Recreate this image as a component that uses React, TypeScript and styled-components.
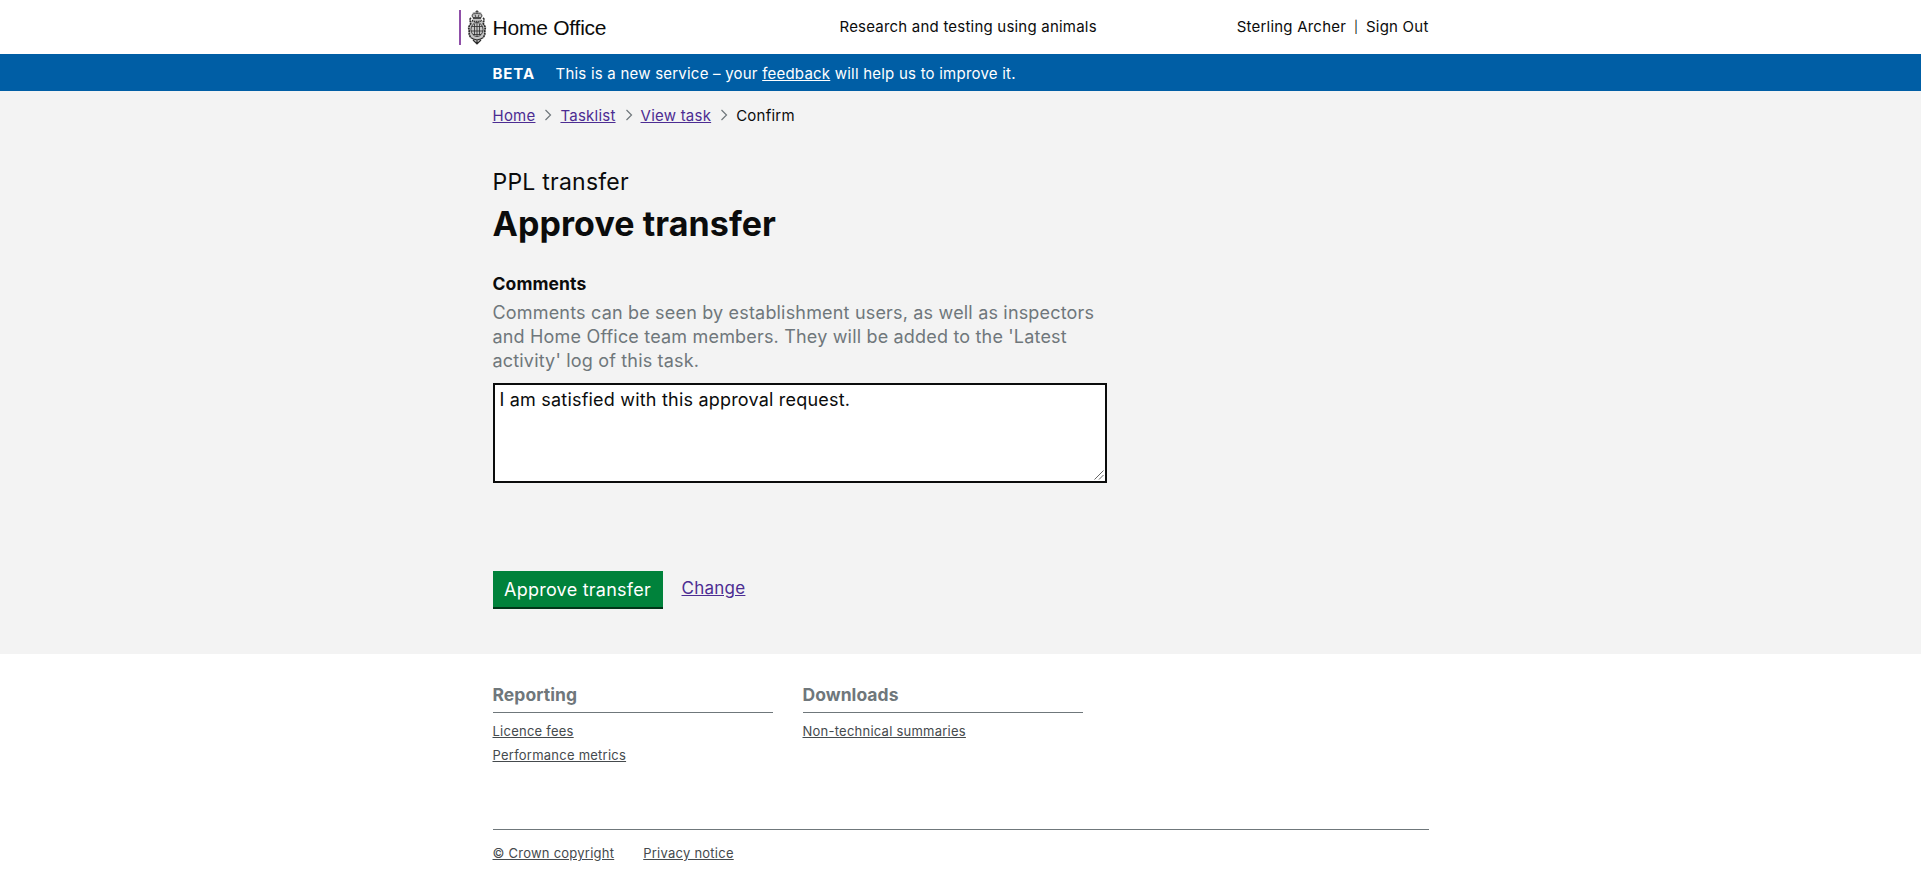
import React from "react";
import styled, { createGlobalStyle } from "styled-components";

const Global = createGlobalStyle`
  *, *::before, *::after { box-sizing: border-box; }
  body {
    margin: 0;
    background: #fff;
    color: #0b0c0c;
    font-family: Inter, "Liberation Sans", sans-serif;
    letter-spacing: 0.2px;
  }
`;

const Container = styled.div`
  width: 936px;
  margin: 0 auto;
`;

const Header = styled.header`
  height: 54px;
`;

const HeaderRow = styled(Container)`
  display: flex;
  align-items: flex-start;
  height: 54px;
`;

const Brand = styled.a`
  display: flex;
  align-items: center;
  width: 381px;
  margin-left: -34px;
  padding-top: 10px;
  color: #0b0c0c;
  text-decoration: none;
`;

const BrandBar = styled.span`
  width: 2px;
  height: 35px;
  background: #8f4fa8;
`;

const BrandName = styled.span`
  margin-left: 6px;
  font: 21px/34px "Liberation Sans", Arial, sans-serif;
  letter-spacing: -0.23px;
  white-space: nowrap;
`;

const HeaderText = styled.div`
  padding-top: 17px;
  font-size: 15px;
  line-height: 20px;
  letter-spacing: 0.21px;
  white-space: nowrap;
`;

const UserNav = styled(HeaderText)`
  display: flex;
  gap: 8px;
  margin-left: auto;
`;

const Divider = styled.span`
  width: 4px;
  font-size: 12px;
  text-align: center;
`;

const Phase = styled.div`
  height: 37px;
  background: #005ea5;
  color: #fff;
  font-size: 15px;
  line-height: 20px;
  letter-spacing: 0.22px;
`;

const PhaseRow = styled(Container)`
  display: flex;
  padding-top: 10px;
`;

const Tag = styled.strong`
  width: 63px;
  font-weight: 700;
  letter-spacing: 0.9px;
`;

const Link = styled.a<{ $tone?: string }>`
  color: ${(p) => p.$tone ?? "#4c2c92"};
  text-decoration: underline;
`;

const Main = styled.main`
  height: 563px;
  background: #f3f3f3;
`;

const Crumbs = styled.nav`
  display: flex;
  align-items: center;
  padding-top: 15px;
  font-size: 15px;
  line-height: 20px;
  letter-spacing: 0.23px;
`;

const Chevron = styled.svg`
  display: block;
  width: 8px;
  height: 12px;
  margin: -3px 8px 0 9px;
`;

const Title = styled.h1`
  margin: 41px 0 0;
  font-size: 34px;
  line-height: 40px;
  font-weight: 700;
  letter-spacing: 0.08px;
`;

const Caption = styled.span`
  display: block;
  margin-bottom: 7px;
  font-size: 23px;
  line-height: 30px;
  font-weight: 400;
  letter-spacing: 0.23px;
`;

const Field = styled.div`
  display: flex;
  flex-direction: column;
  width: 614px;
  margin-top: 28px;
`;

const Label = styled.label`
  font-size: 17.5px;
  line-height: 24px;
  font-weight: 700;
  letter-spacing: 0.1px;
`;

const Hint = styled.span`
  margin-top: 5px;
  color: #6f777b;
  font-size: 18px;
  line-height: 24px;
  letter-spacing: 0.18px;
`;

const TextAreaFrame = styled.div`
  position: relative;
  height: 100px;
  margin-top: 10px;
`;

const TextArea = styled.textarea`
  display: block;
  width: 100%;
  height: 100px;
  padding: 3px 5px;
  border: 2px solid #0b0c0c;
  border-radius: 0;
  background: #fff;
  color: #0b0c0c;
  font: 18px/24px Inter, "Liberation Sans", sans-serif;
  letter-spacing: 0.2px;
  resize: none;
`;

const Grip = styled.svg`
  position: absolute;
  right: 3px;
  bottom: 3px;
  width: 10px;
  height: 10px;
  pointer-events: none;
`;

const Actions = styled.div`
  display: flex;
  align-items: flex-start;
  gap: 19px;
  margin-top: 88px;
`;

const Button = styled.button`
  width: 170px;
  height: 38px;
  padding: 1px 0 0;
  border: 0;
  border-bottom: 2px solid #003618;
  background: #00823b;
  color: #fff;
  font: 18px/24px Inter, "Liberation Sans", sans-serif;
  letter-spacing: 0.25px;
  white-space: nowrap;
`;

const ActionLink = styled(Link)`
  padding-top: 5px;
  font-size: 17px;
  line-height: 24px;
  letter-spacing: 0.25px;
`;

const Columns = styled.div`
  display: flex;
  gap: 30px;
  padding-top: 28px;
`;

const Column = styled.section`
  width: 280px;
  height: 147px;
`;

const ColumnTitle = styled.h2`
  height: 31px;
  margin: 0 0 6px;
  border-bottom: 1px solid #6f777b;
  color: #6f777b;
  font-size: 17.5px;
  line-height: 26px;
  font-weight: 700;
  letter-spacing: 0.05px;
`;

const LinkList = styled.ul`
  margin: 0;
  padding: 0;
  list-style: none;
  font-size: 13px;
  line-height: 24px;
  letter-spacing: 0.24px;
`;

const Meta = styled.div`
  display: flex;
  gap: 29px;
  padding-top: 11px;
  border-top: 1px solid #6f777b;
  font-size: 13px;
  line-height: 24px;
  letter-spacing: 0.24px;
`;

const CrestSvg = styled.svg`
  display: block;
  width: 20px;
  height: 35px;
  margin-left: 6px;
`;

const Crest = () => (
  <CrestSvg viewBox="0 0 20 35" fill="none" stroke="#2b2b2b" strokeWidth="0.8">
    <path
      fill="#c4c4c4"
      stroke="none"
      d="M6 2h8l2 4-2 3 3 3v5l2 4-2 5-3 4-4 4-4-4-3-4-2-5 2-4v-5l3-3-2-3z"
    />
    <path d="M10 0v3M8.5 1.5h3M6 7.500c-2-3 1-5 4-4 3-1 6 1 4 4zM6 8.500h8M8 4.500l.8 2.500M12 4.500l-.8 2.500" />
    <path
      strokeWidth="1.7"
      strokeDasharray="2 .6"
      d="M4 8c-2.500 2 .5 4-.5 6s-2.500 3-1.500 5-1 5 1.500 8M16 8c2.500 2-.5 4 .5 6s2.500 3 1.500 5 1 5-1.500 8"
    />
    <ellipse cx="10" cy="19.5" rx="6" ry="7" />
    <path d="M4.500 16.500h11M4.200 21h11.600M6 24.500h8M10 12.500v14M7.500 14v11M12.500 14v11" />
    <path strokeDasharray="1.2 .7" strokeWidth="1.5" d="M5 10.500c3 1.500 7 1.500 10 0" />
    <path strokeWidth="1.2" d="M3.500 27.500l3 1.500 3.500 1 3.500-1 3-1.500M6 30l4 4 4-4M10 30v3" />
  </CrestSvg>
);

const Separator = () => (
  <Chevron viewBox="0 0 8 12" fill="none" stroke="#6f777b" strokeWidth="1.2">
    <path d="M1.500 1l5 5-5 5" />
  </Chevron>
);

const footerTone = "#454a4d";

export default function App() {
  return (
    <>
      <Global />
      <Header>
        <HeaderRow>
          <Brand>
            <BrandBar />
            <Crest />
            <BrandName>Home Office</BrandName>
          </Brand>
          <HeaderText>Research and testing using animals</HeaderText>
          <UserNav>
            <span>Sterling Archer</span>
            <Divider>|</Divider>
            <span>Sign Out</span>
          </UserNav>
        </HeaderRow>
      </Header>
      <Phase>
        <PhaseRow>
          <Tag>BETA</Tag>
          <span>
            This is a new service – your <Link $tone="#fff">feedback</Link> will help us to improve it.
          </span>
        </PhaseRow>
      </Phase>
      <Main>
        <Container>
          <Crumbs>
            <Link>Home</Link>
            <Separator />
            <Link>Tasklist</Link>
            <Separator />
            <Link>View task</Link>
            <Separator />
            <span>Confirm</span>
          </Crumbs>
          <Title>
            <Caption>PPL transfer</Caption>
            Approve transfer
          </Title>
          <Field>
            <Label htmlFor="comments">Comments</Label>
            <Hint>
              Comments can be seen by establishment users, as well as inspectors and Home Office team members. They
              will be added to the 'Latest activity' log of this task.
            </Hint>
            <TextAreaFrame>
              <TextArea id="comments" defaultValue="I am satisfied with this approval request." />
              <Grip viewBox="0 0 10 10" fill="none" stroke="#555" strokeWidth="0.9">
                <path d="M0.500 9.500l9-9M5 9.500L9.500 5" />
              </Grip>
            </TextAreaFrame>
          </Field>
          <Actions>
            <Button>Approve transfer</Button>
            <ActionLink>Change</ActionLink>
          </Actions>
        </Container>
      </Main>
      <footer>
        <Container>
          <Columns>
            <Column>
              <ColumnTitle>Reporting</ColumnTitle>
              <LinkList>
                <li><Link $tone={footerTone}>Licence fees</Link></li>
                <li><Link $tone={footerTone}>Performance metrics</Link></li>
              </LinkList>
            </Column>
            <Column>
              <ColumnTitle>Downloads</ColumnTitle>
              <LinkList>
                <li><Link $tone={footerTone}>Non-technical summaries</Link></li>
              </LinkList>
            </Column>
          </Columns>
          <Meta>
            <Link $tone={footerTone}>© Crown copyright</Link>
            <Link $tone={footerTone}>Privacy notice</Link>
          </Meta>
        </Container>
      </footer>
    </>
  );
}
